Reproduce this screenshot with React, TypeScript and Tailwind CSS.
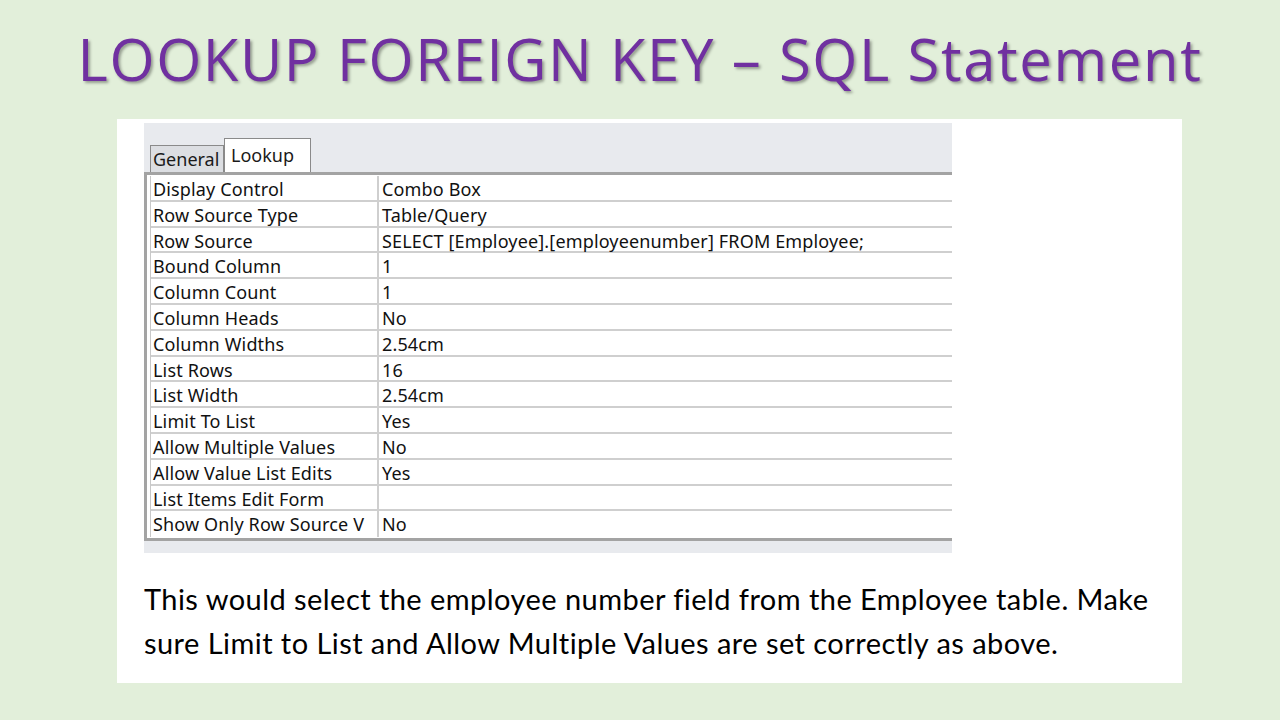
const rows: [string, string][] = [
  ["Display Control", "Combo Box"],
  ["Row Source Type", "Table/Query"],
  ["Row Source", "SELECT [Employee].[employeenumber] FROM Employee;"],
  ["Bound Column", "1"],
  ["Column Count", "1"],
  ["Column Heads", "No"],
  ["Column Widths", "2.54cm"],
  ["List Rows", "16"],
  ["List Width", "2.54cm"],
  ["Limit To List", "Yes"],
  ["Allow Multiple Values", "No"],
  ["Allow Value List Edits", "Yes"],
  ["List Items Edit Form", ""],
  ["Show Only Row Source V", "No"],
];

const App = () => {
  return (
    <div className="w-[1280px] h-[720px] bg-[#e2efda] flex flex-col overflow-hidden" style={{ fontFamily: "'Open Sans', sans-serif" }}>
      {/* Title */}
      <h1
        className="mt-[22px] h-[74px] text-[58px] leading-[74px] text-[#7030a0] tracking-[1.6px] whitespace-nowrap text-center"
        style={{ textShadow: "2px 2px 3px rgba(0,0,0,0.35)" }}
      >
        LOOKUP FOREIGN KEY – SQL Statement
      </h1>

      {/* Content panel */}
      <div className="mt-[23px] ml-[117px] w-[1065px] h-[564px] bg-white flex flex-col">
        <div className="mt-[4px] ml-[27px] w-[808px] h-[430px] bg-[#e8eaee] flex flex-col" style={{ fontFamily: "'Noto Sans', sans-serif" }}>
          {/* Tabs */}
          <div className="mt-[15px] ml-[6px] flex items-end h-[34px]">
            <div className="h-[27px] w-[74px] border border-[#8a8a8a] border-b-0 bg-[#dcdee2] text-[18px] leading-[27px] pl-[2px] text-[#1a1a1a] whitespace-nowrap overflow-hidden">
              General
            </div>
            <div className="h-[34px] w-[87px] border border-[#8a8a8a] border-b-0 bg-white text-[18px] leading-[32px] pl-[6px] text-[#1a1a1a] whitespace-nowrap">
              Lookup
            </div>
          </div>
          {/* Property grid */}
          <div className="border-t-[3px] border-l-[3px] border-b-[3px] border-[#a3a3a3] bg-white pl-[3px] pt-[1px] pb-[1px]">
            <div className="border-l border-[#c8c8c8]">
              {rows.map(([k, v], i) => (
                <div key={i} className="flex h-[25.8px] border-b-2 border-[#cfcfcf] last:border-b-0 text-[18px] leading-[27px] tracking-[0.15px] text-[#111]">
                  <div className="w-[228px] pl-[2px] border-r-2 border-[#cfcfcf] whitespace-nowrap overflow-hidden">{k}</div>
                  <div className="flex-1 pl-[3px] whitespace-nowrap">{v}</div>
                </div>
              ))}
            </div>
          </div>
        </div>

        {/* Description */}
        <p className="mt-[24px] ml-[27px] w-[1020px] text-[29px] leading-[44px] tracking-[0.45px] text-black" style={{ fontFamily: "Lato, sans-serif" }}>
          This would select the employee number field from the Employee table. Make sure Limit to List and Allow Multiple Values are set correctly as above.
        </p>
      </div>
    </div>
  );
};

export default App;
